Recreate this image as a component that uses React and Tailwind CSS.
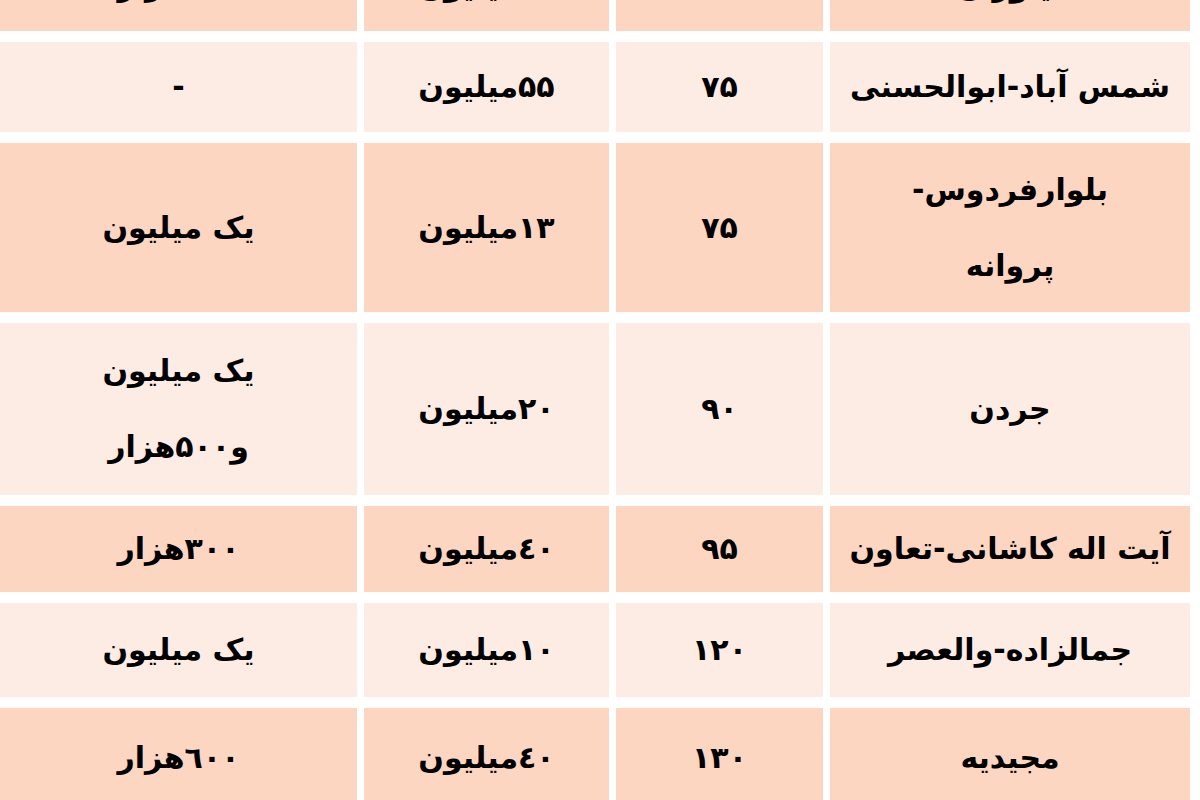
import React from "react";

const PEACH = "bg-[#fcd6c0]";
const LIGHT = "bg-[#fdece3]";

const rows = [
  { h: "h-[90px]", bg: PEACH, cells: [["نیاوران"], ["۶۵"], ["۲۰میلیون"], ["۵۰۰هزار"]] },
  { h: "h-[90px]", bg: LIGHT, cells: [["شمس آباد-ابوالحسنی"], ["۷۵"], ["۵۵میلیون"], ["-"]] },
  { h: "h-[169px]", bg: PEACH, cells: [["بلوارفردوس-", "پروانه"], ["۷۵"], ["۱۳میلیون"], ["یک میلیون"]] },
  { h: "h-[172px]", bg: LIGHT, cells: [["جردن"], ["۹۰"], ["۲۰میلیون"], ["یک میلیون", "و۵۰۰هزار"]] },
  { h: "h-[86px]", bg: PEACH, cells: [["آیت اله کاشانی-تعاون"], ["۹۵"], ["٤۰میلیون"], ["۳۰۰هزار"]] },
  { h: "h-[94px]", bg: LIGHT, cells: [["جمالزاده-والعصر"], ["۱۲۰"], ["۱۰میلیون"], ["یک میلیون"]] },
  { h: "h-[100px]", bg: PEACH, cells: [["مجیدیه"], ["۱۳۰"], ["٤۰میلیون"], ["٦۰۰هزار"]] },
];

const widths = ["w-[360px]", "w-[207px]", "w-[245px]", "w-[357px]"];

export default function App() {
  return (
    <div className="w-[1200px] h-[800px] overflow-hidden bg-white">
      <div
        dir="rtl"
        className="flex flex-col gap-[11px] pr-[10px] mt-[-59px] font-['DejaVu_Sans',sans-serif] font-bold text-black text-[30px]"
      >
        {rows.map((r, i) => (
          <div key={i} className={`flex gap-[7px] ${r.h}`}>
            {r.cells.map((lines, j) => (
              <div
                key={j}
                className={`${widths[j]} ${r.bg} shrink-0 flex flex-col items-center justify-center text-center leading-[76px]`}
              >
                {lines.map((t, k) => (
                  <span key={k} className="whitespace-nowrap">{t}</span>
                ))}
              </div>
            ))}
          </div>
        ))}
      </div>
    </div>
  );
}
